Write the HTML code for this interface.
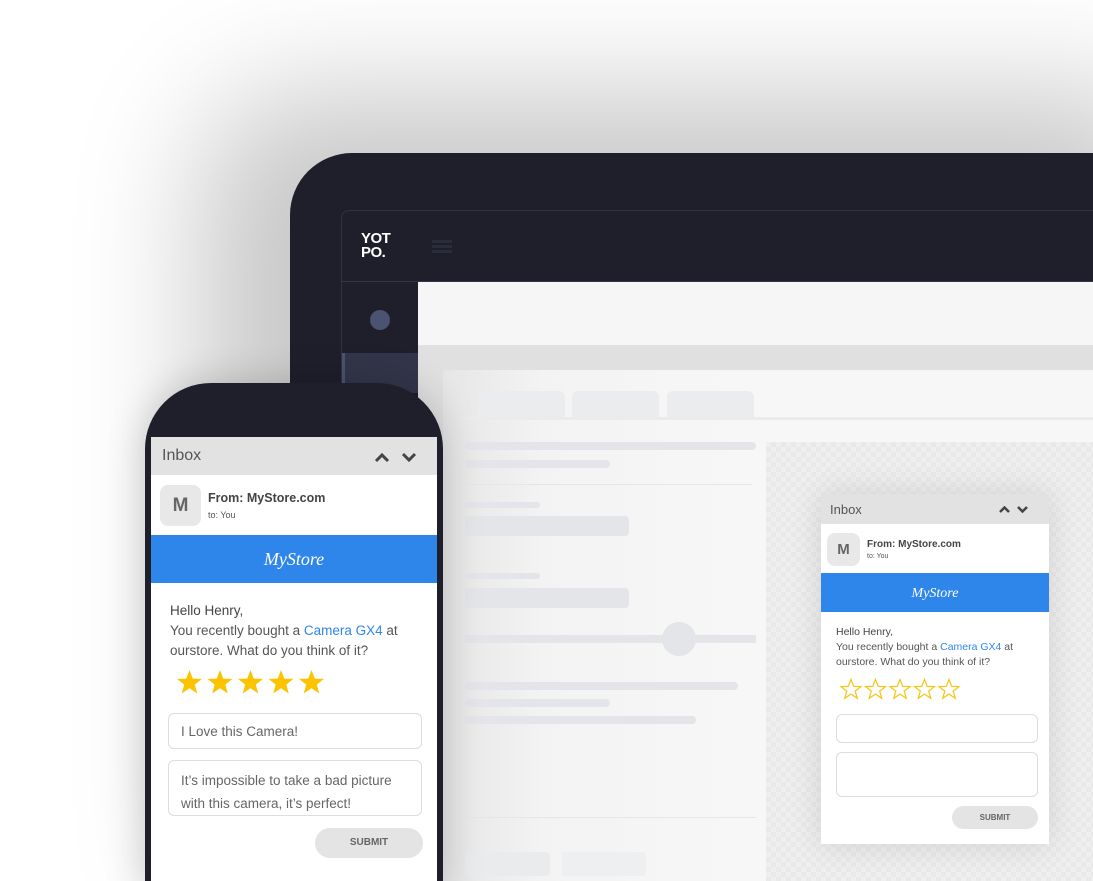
<!DOCTYPE html>
<html><head><meta charset="utf-8"><style>
*{margin:0;padding:0;box-sizing:border-box}
html,body{width:1093px;height:881px;overflow:hidden}
body{background:#fff;position:relative;font-family:"Liberation Sans",sans-serif}
.a{position:absolute}
.bar{position:absolute;background:#e4e5e8;border-radius:4px}
.tab{position:absolute;background:#ebecee;border-radius:6px 6px 0 0}
.script{font-family:"Liberation Serif",serif;font-style:italic;color:#fff}
</style></head><body>
<!-- tablet -->
<div class="a" style="left:290px;top:153px;width:900px;height:728px;background:#1e1f2b;border-radius:62px 0 0 0;box-shadow:-60px -30px 140px 30px rgba(0,0,0,0.22)"></div>
<div class="a" style="left:341px;top:210px;width:760px;height:671px;border:1px solid #2f3242;border-radius:8px 0 0 0;background:#1e1f2b"></div>
<div class="a" style="left:341px;top:281px;width:760px;height:1px;background:#343748"></div>
<div class="a" style="left:361px;top:232px;color:#fff;font-weight:bold;font-size:15px;line-height:14px;letter-spacing:-0.5px">YOT<br>PO.</div>
<div class="a" style="left:432px;top:240px;width:20px;height:3px;background:#2a2c3a;box-shadow:0 5px 0 #2a2c3a,0 10px 0 #2a2c3a"></div>
<div class="a" style="left:370px;top:310px;width:20px;height:20px;border-radius:50%;background:#4a5470"></div>
<div class="a" style="left:342px;top:353px;width:76px;height:40px;background:#33364a;border-left:3px solid #4a5470"></div>
<!-- content -->
<div class="a" style="left:418px;top:282px;width:700px;height:600px;background:#f6f6f6"></div>
<div class="a" style="left:418px;top:345px;width:700px;height:540px;background:#e0e0e0"></div>
<div class="a" style="left:443px;top:370px;width:660px;height:520px;background:linear-gradient(90deg,#e6e6e7,#f3f3f3 15%,#f7f7f7 45%);border-radius:3px"></div>
<div class="tab" style="left:478px;top:391px;width:87px;height:27px"></div>
<div class="tab" style="left:572px;top:391px;width:87px;height:27px"></div>
<div class="tab" style="left:667px;top:391px;width:87px;height:27px"></div>
<div class="a" style="left:465px;top:417px;width:640px;height:3px;background:#eaebed"></div>
<div class="bar" style="left:465px;top:442px;width:291px;height:8px"></div>
<div class="bar" style="left:465px;top:460px;width:145px;height:8px"></div>
<div class="a" style="left:465px;top:484px;width:287px;height:1px;background:#e6e6e8"></div>
<div class="bar" style="left:465px;top:502px;width:75px;height:6px"></div>
<div class="bar" style="left:465px;top:516px;width:164px;height:20px"></div>
<div class="bar" style="left:465px;top:573px;width:75px;height:6px"></div>
<div class="bar" style="left:465px;top:588px;width:164px;height:20px"></div>
<div class="bar" style="left:465px;top:635px;width:291px;height:8px;border-radius:0"></div>
<div class="a" style="left:662px;top:622px;width:34px;height:34px;border-radius:50%;background:#e4e5e8"></div>
<div class="bar" style="left:465px;top:682px;width:273px;height:8px"></div>
<div class="bar" style="left:465px;top:699px;width:145px;height:8px"></div>
<div class="bar" style="left:465px;top:716px;width:231px;height:8px"></div>
<div class="a" style="left:465px;top:817px;width:291px;height:1px;background:#e6e6e8"></div>
<div class="bar" style="left:465px;top:852px;width:85px;height:24px;background:#eaebed"></div>
<div class="bar" style="left:562px;top:852px;width:84px;height:24px;background:#eeeff0"></div>
<div class="a" style="left:766px;top:442px;width:340px;height:440px;background-color:#efefef;background-image:linear-gradient(45deg,#e9e9e9 25%,transparent 25%,transparent 75%,#e9e9e9 75%),linear-gradient(45deg,#e9e9e9 25%,transparent 25%,transparent 75%,#e9e9e9 75%);background-size:10px 10px;background-position:0 0,5px 5px"></div>
<!-- small email -->
<div class="a" style="left:821px;top:494px;width:228px;height:350px;background:#fff;box-shadow:0 0 30px rgba(0,0,0,0.12)">
 <div style="height:30px;background:#e2e2e2;position:relative"><span class="a" style="left:9px;top:8px;font-size:13px;color:#555">Inbox</span>
 <svg class="a" style="left:176px;top:9px" width="40" height="12" viewBox="0 0 40 12"><path d="M3 9 L7.5 4.5 L12 9 M21 4 L25.5 8.5 L30 4" fill="none" stroke="#444" stroke-width="2.5"/></svg></div>
 <div style="height:49px;position:relative"><div class="a" style="left:6px;top:9px;width:33px;height:33px;border-radius:8px;background:#e8e8e8;color:#666;font-weight:bold;font-size:15px;text-align:center;line-height:33px">M</div><div class="a" style="left:46px;top:15px;font-size:10px;font-weight:bold;color:#444">From: MyStore.com</div><div class="a" style="left:46px;top:29px;font-size:7px;color:#555">to: You</div></div>
 <div style="height:39px;background:#2f86ea;text-align:center;line-height:39px" class="script"><span style="font-size:14px">MyStore</span></div>
 <div style="padding:13px 15px 0;font-size:10.5px;line-height:15px;color:#555"><span style="color:#444">Hello Henry,</span><br>You recently bought a <span style="color:#2f86ea">Camera GX4</span> at ourstore. What do you think of it?</div>
 <svg class="a" style="left:19px;top:184px" width="125" height="24" viewBox="0 0 125 24">
  <defs><path id="so" d="M11 1.5 L13.7 8.4 L21 8.6 L15.2 13.1 L17.3 20.3 L11 16.1 L4.7 20.3 L6.8 13.1 L1 8.6 L8.3 8.4 Z" fill="none" stroke="#f5c518" stroke-width="1.2"/></defs>
  <use href="#so" x="0"/><use href="#so" x="24.5"/><use href="#so" x="49"/><use href="#so" x="73.5"/><use href="#so" x="98"/></svg>
 <div class="a" style="left:15px;top:220px;width:202px;height:29px;border:1px solid #ddd;border-radius:6px"></div>
 <div class="a" style="left:15px;top:258px;width:202px;height:45px;border:1px solid #ddd;border-radius:6px"></div>
 <div class="a" style="left:131px;top:312px;width:86px;height:23px;border-radius:12px;background:#e4e4e4;text-align:center;line-height:23px;font-size:8px;font-weight:bold;color:#666">SUBMIT</div>
</div>
<!-- phone -->
<div class="a" style="left:145px;top:383px;width:298px;height:510px;background:#1e1f2b;border-radius:66px 66px 0 0;box-shadow:0 0 40px rgba(0,0,0,0.2)"></div>
<div class="a" style="left:151px;top:437px;width:286px;height:450px;background:#fff">
 <div style="height:38px;background:#e2e2e2;position:relative"><span class="a" style="left:11px;top:10px;font-size:16px;color:#555">Inbox</span>
 <svg class="a" style="left:222px;top:12px" width="50" height="16" viewBox="0 0 50 16"><path d="M3 12 L9 6 L15 12 M30 5 L36 11 L42 5" fill="none" stroke="#444" stroke-width="3"/></svg></div>
 <div style="height:60px;position:relative"><div class="a" style="left:9px;top:10px;width:41px;height:41px;border-radius:8px;background:#e8e8e8;color:#666;font-weight:bold;font-size:19px;text-align:center;line-height:41px">M</div><div class="a" style="left:57px;top:16px;font-size:12.5px;font-weight:bold;color:#444">From: MyStore.com</div><div class="a" style="left:57px;top:35px;font-size:9px;color:#555">to: You</div></div>
 <div style="height:48px;background:#2f86ea;text-align:center;line-height:48px" class="script"><span style="font-size:18px">MyStore</span></div>
 <div style="padding:18px 19px 0;font-size:13.5px;line-height:20px;color:#555"><span style="color:#444">Hello Henry,</span><br>You recently bought a <span style="color:#2f86ea">Camera GX4</span> at ourstore. What do you think of it?</div>
 <svg class="a" style="left:25px;top:232px" width="155" height="28" viewBox="0 0 155 28">
  <defs><path id="sf" d="M13.5 1 L16.8 9.6 L26 9.9 L18.8 15.6 L21.3 24.5 L13.5 19.3 L5.7 24.5 L8.2 15.6 L1 9.9 L10.2 9.6 Z" fill="#fcc400"/></defs>
  <use href="#sf" x="0"/><use href="#sf" x="30.5"/><use href="#sf" x="61"/><use href="#sf" x="91.5"/><use href="#sf" x="122"/></svg>
 <div class="a" style="left:17px;top:276px;width:254px;height:36px;border:1px solid #ddd;border-radius:6px;padding:10px 12px;font-size:13.5px;color:#666">I Love this Camera!</div>
 <div class="a" style="left:17px;top:323px;width:254px;height:56px;border:1px solid #ddd;border-radius:6px;padding:8px 12px;font-size:13.5px;line-height:23px;color:#666">It’s impossible to take a bad picture with this camera, it’s perfect!</div>
 <div class="a" style="left:164px;top:391px;width:108px;height:30px;border-radius:15px;background:#e4e4e4;text-align:center;line-height:30px;font-size:10px;font-weight:bold;color:#666">SUBMIT</div>
</div>
</body></html>
